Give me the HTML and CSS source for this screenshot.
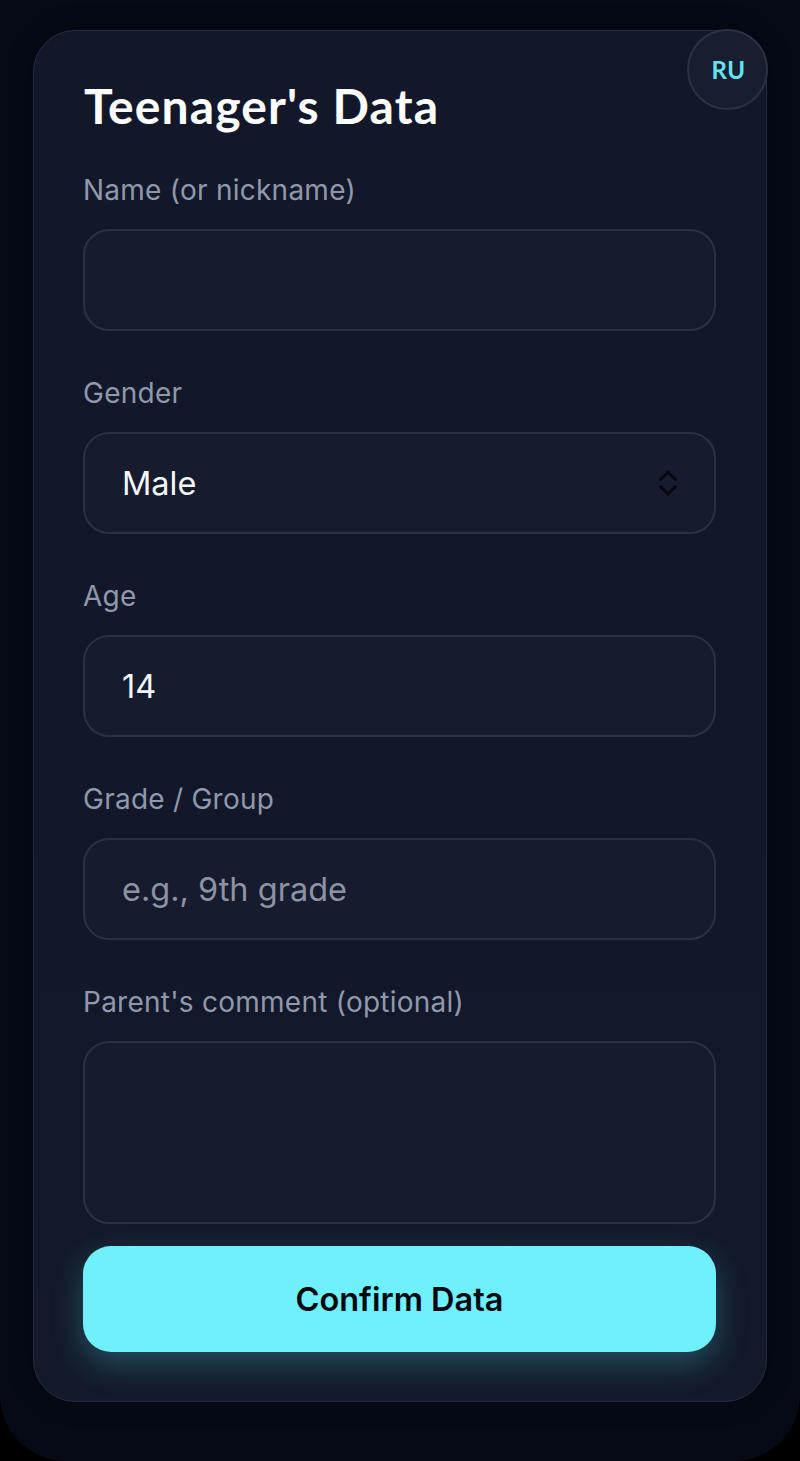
FILE: index.html
```html
<!DOCTYPE html>
<html lang="en">
<head>
<meta charset="utf-8">
<title>Teenager's Data</title>
<link rel="stylesheet" href="styles.css">
</head>
<body>
<div class="frame">
  <div class="card">
    <button class="lang" type="button">RU</button>
    <h1 class="title">Teenager's Data</h1>
    <form class="form">
      <div class="group">
        <label class="label" for="name">Name (or nickname)</label>
        <input class="control" id="name" type="text">
      </div>
      <div class="group">
        <label class="label" for="gender">Gender</label>
        <div class="select-wrap">
          <select class="control select" id="gender">
            <option>Male</option>
            <option>Female</option>
          </select>
          <svg class="chev" width="18" height="26" viewBox="0 0 18 26" aria-hidden="true">
            <path d="M1.5 9.5 L9 2 L16.5 9.5" fill="none" stroke="#05070c" stroke-width="2.6" stroke-linecap="round" stroke-linejoin="round"/>
            <path d="M1.5 16.5 L9 24 L16.5 16.5" fill="none" stroke="#05070c" stroke-width="2.6" stroke-linecap="round" stroke-linejoin="round"/>
          </svg>
        </div>
      </div>
      <div class="group">
        <label class="label" for="age">Age</label>
        <input class="control" id="age" type="text" value="14">
      </div>
      <div class="group">
        <label class="label" for="grade">Grade / Group</label>
        <input class="control" id="grade" type="text" placeholder="e.g., 9th grade">
      </div>
      <div class="group">
        <label class="label" for="comment">Parent's comment (optional)</label>
        <textarea class="control area" id="comment"></textarea>
      </div>
      <button class="confirm" type="button">Confirm Data</button>
    </form>
  </div>
</div>
</body>
</html>
```
FILE: styles.css
```css
* { box-sizing: border-box; }

html, body {
  margin: 0;
  padding: 0;
  background: #000;
}

body {
  font-family: "Inter", "Noto Sans", sans-serif;
}

.frame {
  width: 800px;
  height: 1461px;
  background: #050a16;
  border-radius: 0 0 66px 66px;
  padding: 30px 33px 0 33px;
  overflow: hidden;
}

.card {
  position: relative;
  background: linear-gradient(180deg, #121829 0%, #121829 60%, #131a2a 100%);
  border: 1px solid #252c3c;
  border-radius: 42px;
  padding: 47px 50px 49px 49px;
  box-shadow: 0 0 24px rgba(0, 0, 0, 0.35);
}

.lang {
  position: absolute;
  top: -2px;
  right: -2px;
  width: 81px;
  height: 81px;
  border-radius: 50%;
  background: #181e2e;
  border: 2px solid #2b3244;
  color: #62e4f3;
  font-family: "Lato", "Inter", sans-serif;
  font-weight: 700;
  font-size: 24px;
  letter-spacing: 0.5px;
  padding: 0 0 0 2px;
  display: flex;
  align-items: center;
  justify-content: center;
}

.title {
  margin: 0 0 38px 1px;
  font-family: "Lato", "Inter", sans-serif;
  font-weight: 700;
  font-size: 48px;
  line-height: 56px;
  color: #ffffff;
  letter-spacing: 1.1px;
}

.form {
  display: flex;
  flex-direction: column;
  gap: 44px;
}

.group {
  display: flex;
  flex-direction: column;
  gap: 21px;
}

.label {
  font-size: 28px;
  line-height: 36px;
  color: #8f98ac;
  font-weight: 400;
  letter-spacing: 0.25px;
}

.control {
  width: 100%;
  height: 102px;
  background: #161c2d;
  border: 2px solid #2a3142;
  border-radius: 26px;
  padding: 0 37px;
  font-family: "Inter", "Noto Sans", sans-serif;
  font-size: 32.5px;
  color: #f5f7fb;
  outline: none;
  margin: 0;
}

.control::placeholder {
  color: #8b93a5;
  opacity: 1;
}

.select-wrap {
  position: relative;
}

.select {
  appearance: none;
  -webkit-appearance: none;
  display: block;
}

.chev {
  position: absolute;
  right: 39px;
  top: 38px;
  pointer-events: none;
}

.area {
  height: 183px;
  resize: none;
  padding-top: 24px;
  display: block;
}

.confirm {
  margin-top: -22px;
  height: 106px;
  width: 100%;
  border: none;
  border-radius: 28px;
  background: #6ff0fc;
  color: #05080f;
  font-family: "Inter", "Noto Sans", sans-serif;
  font-weight: 600;
  font-size: 32.5px;
  box-shadow: 0 12px 32px rgba(80, 220, 240, 0.28);
}
```
